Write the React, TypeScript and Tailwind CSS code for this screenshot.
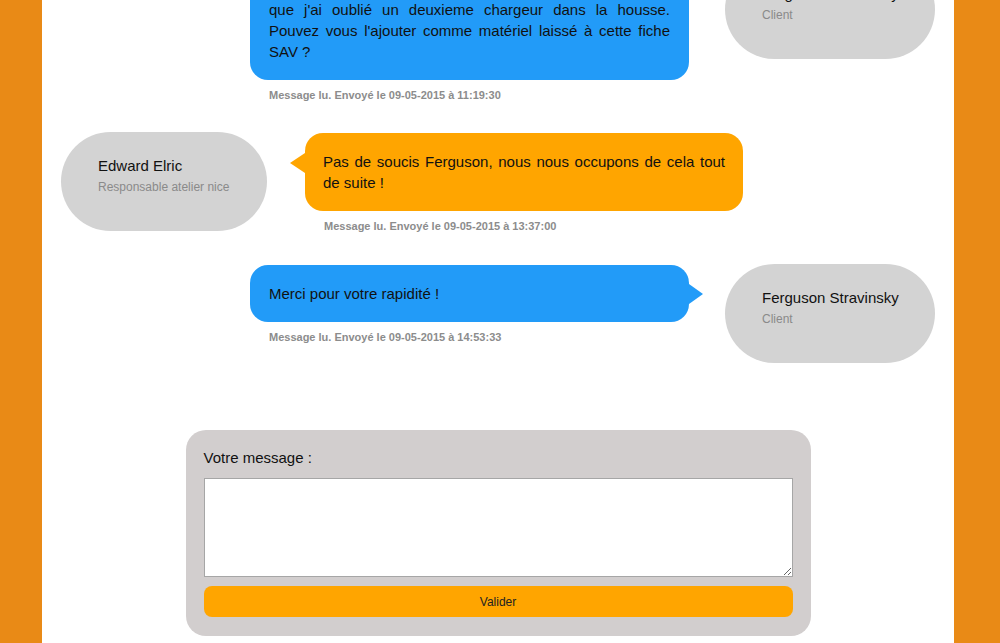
import React from "react";

const font = { fontFamily: '"Liberation Sans", Arial, sans-serif' };

function Avatar({ name, role, width }: { name: string; role: string; width: string }) {
  return (
    <div className={`${width} h-[99px] shrink-0 rounded-full bg-[#d3d3d3] pl-[37px] pt-[24px]`}>
      <div className="text-[15px] leading-[20px] text-[#111]">{name}</div>
      <div className="mt-[3px] text-[12px] leading-[16px] text-[#8a8a8a]">{role}</div>
    </div>
  );
}

function Stamp({ text }: { text: string }) {
  return (
    <div className="mt-[8px] pl-[19px] text-[11px] font-bold leading-[14px] text-[#8c8c8c]">
      Message lu. Envoyé le {text}
    </div>
  );
}

export default function App() {
  return (
    <div style={font} className="h-[643px] w-[1000px] overflow-hidden bg-[#e98a16]">
      <div className="ml-[42px] flex h-[643px] w-[912px] flex-col overflow-hidden bg-white">
        <div className="-mt-[40px] flex flex-col">
          {/* Row 1 */}
          <div className="mb-[30px] flex items-start justify-end gap-[36px] pr-[19px]">
            <div className="w-[439px]">
              <div className="relative rounded-[18px] bg-[#229bf8] px-[19px] py-[18px] text-justify text-[15px] leading-[21px] text-[#111]">
                <div className="[text-align-last:justify]">Bonjour, en rentrant chez moi je me suis rendu compte</div>
                <div>
                  que j'ai oublié un deuxieme chargeur dans la housse. Pouvez vous l'ajouter comme matériel laissé à cette fiche SAV ?
                </div>
              </div>
              <Stamp text="09-05-2015 à 11:19:30" />
            </div>
            <Avatar name="Ferguson Stravinsky" role="Client" width="w-[210px]" />
          </div>

          {/* Row 2 */}
          <div className="mb-[31px] flex items-start gap-[38px] pl-[19px]">
            <Avatar name="Edward Elric" role="Responsable atelier nice" width="w-[206px]" />
            <div className="mt-px w-[438px]">
              <div className="relative rounded-[18px] bg-[#ffa500] px-[18px] py-[18px] text-justify text-[15px] leading-[21px] text-[#111]">
                <div className="absolute left-[-15px] top-[20px] h-0 w-0 border-y-[10px] border-r-[15px] border-y-transparent border-r-[#ffa500]" />
                Pas de soucis Ferguson, nous nous occupons de cela tout de suite !
              </div>
              <Stamp text="09-05-2015 à 13:37:00" />
            </div>
          </div>

          {/* Row 3 */}
          <div className="flex items-start justify-end gap-[36px] pr-[19px]">
            <div className="mt-px w-[439px]">
              <div className="relative rounded-[18px] bg-[#229bf8] px-[19px] py-[18px] text-justify text-[15px] leading-[21px] text-[#111]">
                <div className="absolute right-[-14px] top-[19px] h-0 w-0 border-y-[10px] border-l-[14px] border-y-transparent border-l-[#229bf8]" />
                Merci pour votre rapidité !
              </div>
              <Stamp text="09-05-2015 à 14:53:33" />
            </div>
            <Avatar name="Ferguson Stravinsky" role="Client" width="w-[210px]" />
          </div>

          {/* Form */}
          <div className="mx-auto mt-[67px] w-[625px] rounded-[20px] bg-[#d2cece] px-[18px] pb-[19px] pt-[18px]">
            <div className="mb-[10px] text-[15px] leading-[20px] text-[#111]">Votre message :</div>
            <textarea className="block h-[99px] w-full border border-[#a6a6a6] bg-white" />
            <button className="mt-[9px] block h-[31px] w-full rounded-[8px] bg-[#ffa500] text-[12px] text-[#222]">
              Valider
            </button>
          </div>
        </div>
      </div>
    </div>
  );
}
